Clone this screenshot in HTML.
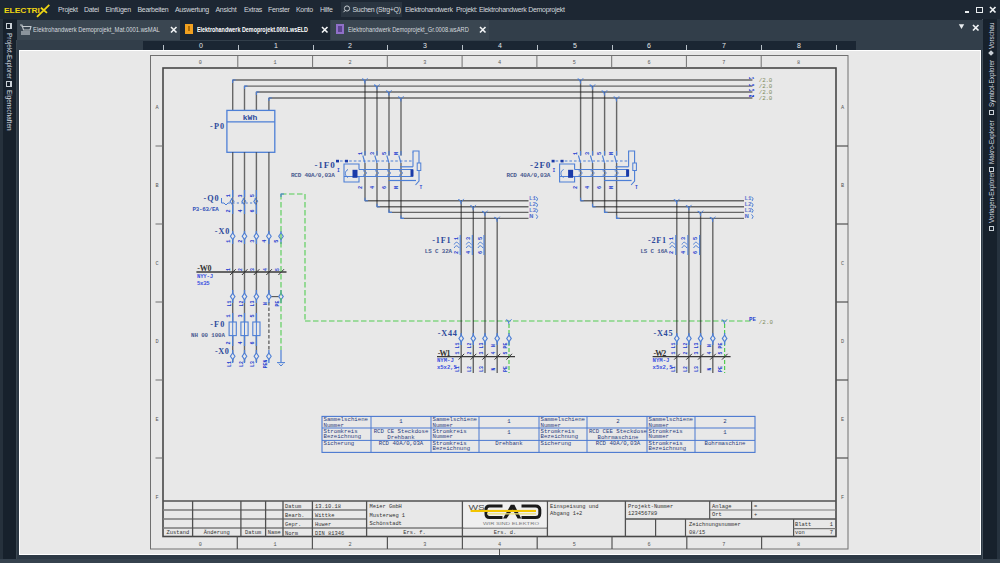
<!DOCTYPE html>
<html><head><meta charset="utf-8">
<style>
*{margin:0;padding:0;box-sizing:border-box}
html,body{width:1000px;height:563px;overflow:hidden;background:#2d3945;font-family:"Liberation Sans",sans-serif}
.a{position:absolute}
#title{left:0;top:0;width:1000px;height:20px;background:#1d2733}
.menu{top:5.8px;font-size:7px;line-height:8px;color:#d3d8dd;white-space:nowrap;letter-spacing:-0.3px}
#tabs{left:17px;top:20px;width:966px;height:30px;background:#323e4a}
.tab{top:20px;height:20px;background:#3a4651}
.tt{top:25.6px;font-size:6.5px;line-height:8px;color:#d5dadf;white-space:nowrap;letter-spacing:-0.2px}
.x{font-size:10px;line-height:10px;color:#fff;font-weight:bold}
#lside{left:0;top:19px;width:17px;height:544px;background:#17212c}
#rside{left:983px;top:19px;width:17px;height:544px;background:#17212c}
#ruler{left:143px;top:40.5px;width:713px;height:9.5px;background:#1b2633}
#canvas{left:19px;top:50px;width:961.5px;height:505px;background:#e8e8e8;border:1px solid #fff}
#status{left:0;top:559px;width:1000px;height:4px;background:#36424e}
.vt{font-size:6.4px;line-height:7px;color:#d5dbe0;white-space:nowrap;transform-origin:0 0}
.rl{top:41.5px;font-size:7px;line-height:7px;color:#e2e6ea}
.rk{top:45px;width:1px;height:4.5px;background:#b8c0c8}
svg{position:absolute;left:0;top:0}
svg text{font-family:"Liberation Mono",monospace}
</style></head><body>
<div id="title" class="a"></div>
<div id="lside" class="a"></div>
<div class="a" style="left:0;top:19px;width:3px;height:544px;background:#26313c"></div>
<div id="rside" class="a"></div>
<div class="a" style="left:982px;top:19px;width:1.3px;height:544px;background:#46525d"></div>
<div class="a" style="left:997px;top:19px;width:3px;height:544px;background:#26323e"></div>
<div class="a" style="left:16px;top:40px;width:1.3px;height:523px;background:#3a4650"></div>
<div id="tabs" class="a"></div>
<div id="status" class="a"></div>
<div id="ruler" class="a"></div>
<div id="canvas" class="a"></div>

<!-- logo -->
<div class="a" style="left:4px;top:6.5px;font-size:7px;line-height:7px;font-weight:bold;color:#eed514;transform:scaleX(1.2);transform-origin:0 0;letter-spacing:0">ELECTRI</div>
<svg width="60" height="20" style="left:0;top:0"><path d="M49.3 4.8 L37 16.8 M40.9 7.8 L47 12.9" stroke="#eed514" stroke-width="1.8" fill="none"/></svg>

<!-- menu -->
<div class="a menu" style="left:58px">Projekt</div>
<div class="a menu" style="left:84px">Datei</div>
<div class="a menu" style="left:105.5px">Einfügen</div>
<div class="a menu" style="left:137.5px">Bearbeiten</div>
<div class="a menu" style="left:175px">Auswertung</div>
<div class="a menu" style="left:215.5px">Ansicht</div>
<div class="a menu" style="left:244px">Extras</div>
<div class="a menu" style="left:268px">Fenster</div>
<div class="a menu" style="left:296px">Konto</div>
<div class="a menu" style="left:320px">Hilfe</div>
<div class="a" style="left:341px;top:2px;width:61px;height:15px;background:#2a3541"></div>
<svg width="12" height="12" style="left:342px;top:3px"><circle cx="5" cy="5.5" r="2.6" stroke="#d3d8dd" stroke-width="0.9" fill="none"/><path d="M3.2 7.4 L1.5 9.2" stroke="#d3d8dd" stroke-width="1"/></svg>
<div class="a menu" style="left:352.5px">Suchen (Strg+Q)</div>
<div class="a menu" style="left:405px">Elektrohandwerk&nbsp; Projekt: Elektrohandwerk Demoprojekt</div>
<!-- window controls -->
<div class="a" style="left:964.5px;top:11px;width:4.5px;height:1.6px;background:#e8ecef"></div>
<div class="a" style="left:976px;top:6.5px;width:6.5px;height:6px;border:1.4px solid #e8ecef"></div>
<svg width="8" height="8" style="left:989px;top:6px"><path d="M1 1 L6.5 6.5 M6.5 1 L1 6.5" stroke="#eef1f4" stroke-width="1.7"/></svg>
<!-- tabs -->
<div class="a tab" style="left:17px;width:163px"></div>
<div class="a tab" style="left:180px;width:150px;background:#1c2632"></div>
<div class="a tab" style="left:331px;width:158px"></div>
<svg width="16" height="16" style="left:19px;top:22px"><path d="M1 3 L3 3 L4.5 8 L11 8 L12 4.5 M2.5 4.5 L12.5 4.5" stroke="#c4c9ce" stroke-width="1.1" fill="none"/><rect x="2" y="9" width="9" height="4" fill="#8b949c"/></svg>
<div class="a tt" style="left:33.4px;transform:scaleX(0.9);transform-origin:0 0;letter-spacing:0">Elektrohandwerk Demoprojekt_Mat.0001.wsMAL</div>
<svg width="9" height="9" style="left:170px;top:25.5px"><path d="M1 1 L6.5 6.5 M6.5 1 L1 6.5" stroke="#f2f4f6" stroke-width="1.6"/></svg>
<div class="a" style="left:185px;top:24px;width:8px;height:10px;background:#f0a020"></div>
<div class="a" style="left:188px;top:26px;width:2px;height:5px;background:#b06a00"></div>
<div class="a tt" style="left:197px;color:#fff;font-weight:bold;letter-spacing:0;transform:scaleX(0.83);transform-origin:0 0">Elektrohandwerk Demoprojekt.0001.wsELD</div>
<svg width="9" height="9" style="left:321px;top:25.5px"><path d="M1 1 L6.5 6.5 M6.5 1 L1 6.5" stroke="#f2f4f6" stroke-width="1.6"/></svg>
<div class="a" style="left:336px;top:24px;width:8px;height:10px;background:#9070c8"></div>
<div class="a" style="left:338px;top:26px;width:4px;height:6px;background:#5c4490"></div>
<div class="a tt" style="left:348px;transform:scaleX(0.88);transform-origin:0 0;letter-spacing:0">Elektrohandwerk Demoprojekt_Gr.0008.wsARD</div>
<svg width="9" height="9" style="left:479px;top:25.5px"><path d="M1 1 L6.5 6.5 M6.5 1 L1 6.5" stroke="#f2f4f6" stroke-width="1.6"/></svg>
<!-- doc controls -->
<svg width="10" height="10" style="left:958px;top:23px"><path d="M0.8 1.2 L6.2 1.2 L3.5 6 Z" fill="#e8ecef"/></svg>
<svg width="9" height="9" style="left:972px;top:23.5px"><path d="M1 1 L6.5 6.5 M6.5 1 L1 6.5" stroke="#f2f4f6" stroke-width="1.7"/></svg>

<!-- sidebars -->
<div class="a" style="left:6px;top:23px;width:6px;height:6px;border:1px solid #c9d0d7;border-right-width:2px"></div>
<div class="a vt" style="left:12.5px;top:33px;transform:rotate(90deg)">Projekt-Explorer</div>
<div class="a" style="left:6px;top:81px;width:6px;height:6px;border:1px solid #c9d0d7;border-right-width:2px"></div>
<div class="a vt" style="left:12.5px;top:90px;transform:rotate(90deg)">Eigenschaften</div>

<div class="a vt" style="left:988px;top:49px;transform:rotate(-90deg)">Vorschau</div>
<div class="a" style="left:989px;top:51px;width:4px;height:4px;background:#c9d0d7;transform:rotate(45deg)"></div>
<div class="a vt" style="left:988px;top:107px;transform:rotate(-90deg)">Symbol-Explorer</div>
<div class="a" style="left:988.5px;top:110px;width:5px;height:5px;border:1px solid #c9d0d7"></div>
<div class="a vt" style="left:988px;top:164px;transform:rotate(-90deg)">Makro-Explorer</div>
<div class="a" style="left:988.5px;top:167px;width:5px;height:5px;border:1px solid #c9d0d7"></div>
<div class="a vt" style="left:988px;top:223px;transform:rotate(-90deg)">Vorlagen-Explorer</div>
<div class="a" style="left:988.5px;top:226px;width:5px;height:5px;border:1px solid #c9d0d7"></div>

<!-- ruler -->
<div class="a rk" style="left:163px"></div>
<div class="a rk" style="left:238px"></div>
<div class="a rk" style="left:313px"></div>
<div class="a rk" style="left:387px"></div>
<div class="a rk" style="left:462px"></div>
<div class="a rk" style="left:537px"></div>
<div class="a rk" style="left:612px"></div>
<div class="a rk" style="left:686px"></div>
<div class="a rk" style="left:761px"></div>
<div class="a rk" style="left:836px"></div>
<div class="a rl" style="left:199px">0</div>
<div class="a rl" style="left:274px">1</div>
<div class="a rl" style="left:348px">2</div>
<div class="a rl" style="left:423px">3</div>
<div class="a rl" style="left:498px">4</div>
<div class="a rl" style="left:573px">5</div>
<div class="a rl" style="left:647px">6</div>
<div class="a rl" style="left:722px">7</div>
<div class="a rl" style="left:797px">8</div>

<!--DRAWING--><svg width="1000" height="563" style="left:0;top:0">
<rect x="150.5" y="55.5" width="697.5" height="493.5" stroke="#707070" stroke-width="1.0" fill="none" />
<rect x="163" y="68" width="673" height="468.5" stroke="#474747" stroke-width="1.6" fill="none" />
<line x1="237.8" y1="55.5" x2="237.8" y2="68" stroke="#707070" stroke-width="1.0" />
<line x1="312.6" y1="55.5" x2="312.6" y2="68" stroke="#707070" stroke-width="1.0" />
<line x1="387.3" y1="55.5" x2="387.3" y2="68" stroke="#707070" stroke-width="1.0" />
<line x1="462.1" y1="55.5" x2="462.1" y2="68" stroke="#707070" stroke-width="1.0" />
<line x1="536.9" y1="55.5" x2="536.9" y2="68" stroke="#707070" stroke-width="1.0" />
<line x1="611.7" y1="55.5" x2="611.7" y2="68" stroke="#707070" stroke-width="1.0" />
<line x1="686.4" y1="55.5" x2="686.4" y2="68" stroke="#707070" stroke-width="1.0" />
<line x1="761.2" y1="55.5" x2="761.2" y2="68" stroke="#707070" stroke-width="1.0" />
<text x="200.38888888888889" y="64" font-size="5.2" fill="#555" text-anchor="middle" >0</text>
<text x="275.16666666666663" y="64" font-size="5.2" fill="#555" text-anchor="middle" >1</text>
<text x="349.94444444444446" y="64" font-size="5.2" fill="#555" text-anchor="middle" >2</text>
<text x="424.7222222222222" y="64" font-size="5.2" fill="#555" text-anchor="middle" >3</text>
<text x="499.5" y="64" font-size="5.2" fill="#555" text-anchor="middle" >4</text>
<text x="574.2777777777778" y="64" font-size="5.2" fill="#555" text-anchor="middle" >5</text>
<text x="649.0555555555555" y="64" font-size="5.2" fill="#555" text-anchor="middle" >6</text>
<text x="723.8333333333333" y="64" font-size="5.2" fill="#555" text-anchor="middle" >7</text>
<text x="798.6111111111111" y="64" font-size="5.2" fill="#555" text-anchor="middle" >8</text>
<line x1="237.3" y1="536.5" x2="237.3" y2="549" stroke="#555" stroke-width="1.2" />
<line x1="312.4" y1="536.5" x2="312.4" y2="549" stroke="#555" stroke-width="1.2" />
<line x1="387.4" y1="536.5" x2="387.4" y2="549" stroke="#555" stroke-width="1.2" />
<line x1="462.4" y1="536.5" x2="462.4" y2="549" stroke="#555" stroke-width="1.2" />
<line x1="537.2" y1="536.5" x2="537.2" y2="549" stroke="#555" stroke-width="1.2" />
<line x1="612" y1="536.5" x2="612" y2="549" stroke="#555" stroke-width="1.2" />
<line x1="686.8" y1="536.5" x2="686.8" y2="549" stroke="#555" stroke-width="1.2" />
<line x1="761.6" y1="536.5" x2="761.6" y2="549" stroke="#555" stroke-width="1.2" />
<text x="200.38888888888889" y="545.5" font-size="5.2" fill="#555" text-anchor="middle" >0</text>
<text x="275.16666666666663" y="545.5" font-size="5.2" fill="#555" text-anchor="middle" >1</text>
<text x="349.94444444444446" y="545.5" font-size="5.2" fill="#555" text-anchor="middle" >2</text>
<text x="424.7222222222222" y="545.5" font-size="5.2" fill="#555" text-anchor="middle" >3</text>
<text x="499.5" y="545.5" font-size="5.2" fill="#555" text-anchor="middle" >4</text>
<text x="574.2777777777778" y="545.5" font-size="5.2" fill="#555" text-anchor="middle" >5</text>
<text x="649.0555555555555" y="545.5" font-size="5.2" fill="#555" text-anchor="middle" >6</text>
<text x="723.8333333333333" y="545.5" font-size="5.2" fill="#555" text-anchor="middle" >7</text>
<text x="798.6111111111111" y="545.5" font-size="5.2" fill="#555" text-anchor="middle" >8</text>
<text x="157" y="109" font-size="5.2" fill="#555" text-anchor="middle" >A</text>
<text x="842.5" y="109" font-size="5.2" fill="#555" text-anchor="middle" >A</text>
<text x="157" y="187" font-size="5.2" fill="#555" text-anchor="middle" >B</text>
<text x="842.5" y="187" font-size="5.2" fill="#555" text-anchor="middle" >B</text>
<line x1="155.5" y1="146" x2="163" y2="146" stroke="#707070" stroke-width="1.0" />
<line x1="836" y1="146" x2="848" y2="146" stroke="#505050" stroke-width="1.2" />
<text x="157" y="265" font-size="5.2" fill="#555" text-anchor="middle" >C</text>
<text x="842.5" y="265" font-size="5.2" fill="#555" text-anchor="middle" >C</text>
<line x1="155.5" y1="224" x2="163" y2="224" stroke="#707070" stroke-width="1.0" />
<line x1="836" y1="224" x2="848" y2="224" stroke="#505050" stroke-width="1.2" />
<text x="157" y="343" font-size="5.2" fill="#555" text-anchor="middle" >D</text>
<text x="842.5" y="343" font-size="5.2" fill="#555" text-anchor="middle" >D</text>
<line x1="155.5" y1="302" x2="163" y2="302" stroke="#707070" stroke-width="1.0" />
<line x1="836" y1="302" x2="848" y2="302" stroke="#505050" stroke-width="1.2" />
<text x="157" y="421" font-size="5.2" fill="#555" text-anchor="middle" >E</text>
<text x="842.5" y="421" font-size="5.2" fill="#555" text-anchor="middle" >E</text>
<line x1="155.5" y1="380" x2="163" y2="380" stroke="#707070" stroke-width="1.0" />
<line x1="836" y1="380" x2="848" y2="380" stroke="#505050" stroke-width="1.2" />
<text x="157" y="499" font-size="5.2" fill="#555" text-anchor="middle" >F</text>
<text x="842.5" y="499" font-size="5.2" fill="#555" text-anchor="middle" >F</text>
<line x1="155.5" y1="458" x2="163" y2="458" stroke="#707070" stroke-width="1.0" />
<line x1="836" y1="458" x2="848" y2="458" stroke="#505050" stroke-width="1.2" />
<line x1="163" y1="501" x2="836" y2="501" stroke="#505050" stroke-width="1.6" />
<line x1="163" y1="510" x2="283" y2="510" stroke="#7a7a7a" stroke-width="1.3" />
<line x1="283" y1="510" x2="366.6" y2="510" stroke="#7a7a7a" stroke-width="1.3" />
<line x1="163" y1="519" x2="283" y2="519" stroke="#7a7a7a" stroke-width="1.3" />
<line x1="283" y1="519" x2="366.6" y2="519" stroke="#7a7a7a" stroke-width="1.3" />
<line x1="163" y1="528" x2="283" y2="528" stroke="#7a7a7a" stroke-width="1.3" />
<line x1="283" y1="528" x2="366.6" y2="528" stroke="#7a7a7a" stroke-width="1.3" />
<line x1="366.6" y1="528" x2="547.4" y2="528" stroke="#7a7a7a" stroke-width="1.3" />
<line x1="192.6" y1="501" x2="192.6" y2="536.5" stroke="#505050" stroke-width="1.3" />
<line x1="240.9" y1="501" x2="240.9" y2="536.5" stroke="#505050" stroke-width="1.3" />
<line x1="265.6" y1="501" x2="265.6" y2="536.5" stroke="#505050" stroke-width="1.3" />
<line x1="283" y1="501" x2="283" y2="536.5" stroke="#505050" stroke-width="1.3" />
<line x1="312.4" y1="501" x2="312.4" y2="536.5" stroke="#505050" stroke-width="1.3" />
<line x1="366.6" y1="501" x2="366.6" y2="536.5" stroke="#505050" stroke-width="1.3" />
<line x1="462.4" y1="501" x2="462.4" y2="536.5" stroke="#505050" stroke-width="1.3" />
<line x1="547.4" y1="501" x2="547.4" y2="536.5" stroke="#505050" stroke-width="1.3" />
<line x1="625.4" y1="501" x2="625.4" y2="536.5" stroke="#505050" stroke-width="1.3" />
<text x="177.8" y="533.8" font-size="5.4" fill="#333" text-anchor="middle" >Zustand</text>
<text x="216.7" y="533.8" font-size="5.4" fill="#333" text-anchor="middle" >Änderung</text>
<text x="253.2" y="533.8" font-size="5.4" fill="#333" text-anchor="middle" >Datum</text>
<text x="274.3" y="533.8" font-size="5.4" fill="#333" text-anchor="middle" >Name</text>
<text x="285" y="507.6" font-size="5.4" fill="#333" text-anchor="start" >Datum</text>
<text x="315" y="507.6" font-size="5.4" fill="#333" text-anchor="start" >13.10.18</text>
<text x="285" y="516.6" font-size="5.4" fill="#333" text-anchor="start" >Bearb.</text>
<text x="315" y="516.6" font-size="5.4" fill="#333" text-anchor="start" >Wittke</text>
<text x="285" y="525.6" font-size="5.4" fill="#333" text-anchor="start" >Gepr.</text>
<text x="315" y="525.6" font-size="5.4" fill="#333" text-anchor="start" >Huwer</text>
<text x="285" y="534.6" font-size="5.4" fill="#333" text-anchor="start" >Norm</text>
<text x="315" y="534.6" font-size="5.4" fill="#333" text-anchor="start" >DIN 81346</text>
<text x="369.5" y="507.6" font-size="5.4" fill="#333" text-anchor="start" >Meier GmbH</text>
<text x="369.5" y="516.6" font-size="5.4" fill="#333" text-anchor="start" >Musterweg 1</text>
<text x="369.5" y="525.4" font-size="5.4" fill="#333" text-anchor="start" >Schönstadt</text>
<text x="414.5" y="534" font-size="5.4" fill="#333" text-anchor="middle" >Ers. f.</text>
<text x="505" y="534" font-size="5.4" fill="#333" text-anchor="middle" >Ers. d.</text>
<text x="550" y="508" font-size="5.4" fill="#333" text-anchor="start" >Einspeisung und</text>
<text x="550" y="514.5" font-size="5.4" fill="#333" text-anchor="start" >Abgang 1+2</text>
<line x1="625.4" y1="519" x2="836" y2="519" stroke="#505050" stroke-width="1.3" />
<line x1="709.7" y1="510" x2="836" y2="510" stroke="#7a7a7a" stroke-width="1.2" />
<line x1="709.7" y1="501" x2="709.7" y2="519" stroke="#505050" stroke-width="1.2" />
<line x1="751.6" y1="501" x2="751.6" y2="519" stroke="#505050" stroke-width="1.2" />
<line x1="655.6" y1="519" x2="655.6" y2="536.5" stroke="#505050" stroke-width="1.2" />
<line x1="685.5" y1="519" x2="685.5" y2="536.5" stroke="#505050" stroke-width="1.2" />
<line x1="793.6" y1="519" x2="793.6" y2="536.5" stroke="#505050" stroke-width="1.2" />
<line x1="793.6" y1="528.6" x2="836" y2="528.6" stroke="#7a7a7a" stroke-width="1.2" />
<text x="628" y="508" font-size="5.4" fill="#333" text-anchor="start" >Projekt-Nummer</text>
<text x="628" y="515" font-size="5.4" fill="#333" text-anchor="start" >123456789</text>
<text x="712" y="507.6" font-size="5.4" fill="#333" text-anchor="start" >Anlage</text>
<text x="754" y="507.6" font-size="5.4" fill="#333" text-anchor="start" >=</text>
<text x="712" y="516.4" font-size="5.4" fill="#333" text-anchor="start" >Ort</text>
<text x="754" y="516.4" font-size="5.4" fill="#333" text-anchor="start" >+</text>
<text x="689" y="525.5" font-size="5.4" fill="#333" text-anchor="start" >Zeichnungsnummer</text>
<text x="689" y="533.5" font-size="5.4" fill="#333" text-anchor="start" >08/15</text>
<text x="795" y="525.6" font-size="5.4" fill="#333" text-anchor="start" >Blatt</text>
<text x="833" y="525.6" font-size="5.4" fill="#333" text-anchor="end" >1</text>
<text x="795" y="534" font-size="5.4" fill="#333" text-anchor="start" >von</text>
<text x="833" y="534" font-size="5.4" fill="#333" text-anchor="end" >7</text>
<g>
<rect x="463.5" y="502.5" width="83" height="25" stroke="none" stroke-width="0" fill="#efefef" />
<text x="468.4" y="509.6" font-size="6.6" fill="#4a4a4a" text-anchor="start" style="font-family:&quot;Liberation Sans&quot;" textLength="16.4" lengthAdjust="spacingAndGlyphs" >WS</text>
<path d="M502.5 506 L489.5 506 Q486 506 486 509.5 L486 514 Q486 517.5 489.5 517.5 L502.5 517.5" stroke="#1a1a1a" stroke-width="3.0" fill="none" />
<path d="M503 518.6 L510.8 504.8 L514.4 504.8 L521.2 518.6 L517.6 518.6 L512.6 509.5 L506.6 518.6 Z" stroke="#1a1a1a" stroke-width="0" fill="#1a1a1a" />
<path d="M521.5 506 L535.5 506 Q539.8 506 539.8 510 L539.8 513.5 Q539.8 517.5 535.5 517.5 L521.5 517.5" stroke="#1a1a1a" stroke-width="3.0" fill="none" />
<rect x="470.6" y="509.9" width="65.4" height="2.1" stroke="none" stroke-width="0" fill="#f2c400" />
<rect x="487" y="513.2" width="49" height="1.3" stroke="none" stroke-width="0" fill="#ece07a" />
<text x="511" y="524.6" font-size="2.8" fill="#777" text-anchor="middle" style="font-family:&quot;Liberation Sans&quot;" textLength="56" lengthAdjust="spacingAndGlyphs" >WIR SIND ELEKTRO</text>
</g>
<rect x="322" y="416.4" width="433" height="36" stroke="#4a78d0" stroke-width="1.1" fill="none" />
<line x1="322" y1="428" x2="755" y2="428" stroke="#4a78d0" stroke-width="1.0" />
<line x1="322" y1="440.4" x2="755" y2="440.4" stroke="#4a78d0" stroke-width="1.0" />
<line x1="371" y1="416.4" x2="371" y2="452.4" stroke="#4a78d0" stroke-width="1.0" />
<line x1="431" y1="416.4" x2="431" y2="452.4" stroke="#4a78d0" stroke-width="1.0" />
<line x1="479" y1="416.4" x2="479" y2="452.4" stroke="#4a78d0" stroke-width="1.0" />
<line x1="539" y1="416.4" x2="539" y2="452.4" stroke="#4a78d0" stroke-width="1.0" />
<line x1="587" y1="416.4" x2="587" y2="452.4" stroke="#4a78d0" stroke-width="1.0" />
<line x1="647" y1="416.4" x2="647" y2="452.4" stroke="#4a78d0" stroke-width="1.0" />
<line x1="695" y1="416.4" x2="695" y2="452.4" stroke="#4a78d0" stroke-width="1.0" />
<line x1="499.5" y1="549" x2="499.5" y2="555" stroke="#555" stroke-width="1.0" />
<text x="323.5" y="421.0" font-size="5.6" fill="#2a3c7c" text-anchor="start" textLength="44.5" lengthAdjust="spacingAndGlyphs" >Sammelschiene</text>
<text x="323.5" y="426.5" font-size="5.6" fill="#2a3c7c" text-anchor="start" textLength="20.5" lengthAdjust="spacingAndGlyphs" >Nummer</text>
<text x="323.5" y="432.5" font-size="5.6" fill="#2a3c7c" text-anchor="start" textLength="34.2" lengthAdjust="spacingAndGlyphs" >Stromkreis</text>
<text x="323.5" y="438.0" font-size="5.6" fill="#2a3c7c" text-anchor="start" textLength="37.6" lengthAdjust="spacingAndGlyphs" >Bezeichnung</text>
<text x="323.5" y="444.8" font-size="5.6" fill="#2a3c7c" text-anchor="start" textLength="30.8" lengthAdjust="spacingAndGlyphs" >Sicherung</text>
<text x="401" y="422.5" font-size="5.6" fill="#2a3c7c" text-anchor="middle" textLength="3.4" lengthAdjust="spacingAndGlyphs" >1</text>
<text x="401" y="433.2" font-size="5.6" fill="#2a3c7c" text-anchor="middle" textLength="54.7" lengthAdjust="spacingAndGlyphs" >RCD CE Steckdose</text>
<text x="401" y="438.7" font-size="5.6" fill="#2a3c7c" text-anchor="middle" textLength="27.4" lengthAdjust="spacingAndGlyphs" >Drehbank</text>
<text x="401" y="445.4" font-size="5.6" fill="#2a3c7c" text-anchor="middle" textLength="44.5" lengthAdjust="spacingAndGlyphs" >RCD 40A/0,03A</text>
<text x="540.5" y="421.0" font-size="5.6" fill="#2a3c7c" text-anchor="start" textLength="44.5" lengthAdjust="spacingAndGlyphs" >Sammelschiene</text>
<text x="540.5" y="426.5" font-size="5.6" fill="#2a3c7c" text-anchor="start" textLength="20.5" lengthAdjust="spacingAndGlyphs" >Nummer</text>
<text x="540.5" y="432.5" font-size="5.6" fill="#2a3c7c" text-anchor="start" textLength="34.2" lengthAdjust="spacingAndGlyphs" >Stromkreis</text>
<text x="540.5" y="438.0" font-size="5.6" fill="#2a3c7c" text-anchor="start" textLength="37.6" lengthAdjust="spacingAndGlyphs" >Bezeichnung</text>
<text x="540.5" y="444.8" font-size="5.6" fill="#2a3c7c" text-anchor="start" textLength="30.8" lengthAdjust="spacingAndGlyphs" >Sicherung</text>
<text x="618" y="422.5" font-size="5.6" fill="#2a3c7c" text-anchor="middle" textLength="3.4" lengthAdjust="spacingAndGlyphs" >2</text>
<text x="618" y="433.2" font-size="5.6" fill="#2a3c7c" text-anchor="middle" textLength="58.1" lengthAdjust="spacingAndGlyphs" >RCD CEE Steckdose</text>
<text x="618" y="438.7" font-size="5.6" fill="#2a3c7c" text-anchor="middle" textLength="41.0" lengthAdjust="spacingAndGlyphs" >Bohrmaschine</text>
<text x="618" y="445.4" font-size="5.6" fill="#2a3c7c" text-anchor="middle" textLength="44.5" lengthAdjust="spacingAndGlyphs" >RCD 40A/0,03A</text>
<text x="432.5" y="421.0" font-size="5.6" fill="#2a3c7c" text-anchor="start" textLength="44.5" lengthAdjust="spacingAndGlyphs" >Sammelschiene</text>
<text x="432.5" y="426.5" font-size="5.6" fill="#2a3c7c" text-anchor="start" textLength="20.5" lengthAdjust="spacingAndGlyphs" >Nummer</text>
<text x="432.5" y="432.5" font-size="5.6" fill="#2a3c7c" text-anchor="start" textLength="34.2" lengthAdjust="spacingAndGlyphs" >Stromkreis</text>
<text x="432.5" y="438.0" font-size="5.6" fill="#2a3c7c" text-anchor="start" textLength="20.5" lengthAdjust="spacingAndGlyphs" >Nummer</text>
<text x="432.5" y="444.8" font-size="5.6" fill="#2a3c7c" text-anchor="start" textLength="34.2" lengthAdjust="spacingAndGlyphs" >Stromkreis</text>
<text x="432.5" y="450.3" font-size="5.6" fill="#2a3c7c" text-anchor="start" textLength="37.6" lengthAdjust="spacingAndGlyphs" >Bezeichnung</text>
<text x="509" y="422.5" font-size="5.6" fill="#2a3c7c" text-anchor="middle" textLength="3.4" lengthAdjust="spacingAndGlyphs" >1</text>
<text x="509" y="433.5" font-size="5.6" fill="#2a3c7c" text-anchor="middle" textLength="3.4" lengthAdjust="spacingAndGlyphs" >1</text>
<text x="509" y="445.4" font-size="5.6" fill="#2a3c7c" text-anchor="middle" textLength="27.4" lengthAdjust="spacingAndGlyphs" >Drehbank</text>
<text x="648.5" y="421.0" font-size="5.6" fill="#2a3c7c" text-anchor="start" textLength="44.5" lengthAdjust="spacingAndGlyphs" >Sammelschiene</text>
<text x="648.5" y="426.5" font-size="5.6" fill="#2a3c7c" text-anchor="start" textLength="20.5" lengthAdjust="spacingAndGlyphs" >Nummer</text>
<text x="648.5" y="432.5" font-size="5.6" fill="#2a3c7c" text-anchor="start" textLength="34.2" lengthAdjust="spacingAndGlyphs" >Stromkreis</text>
<text x="648.5" y="438.0" font-size="5.6" fill="#2a3c7c" text-anchor="start" textLength="20.5" lengthAdjust="spacingAndGlyphs" >Nummer</text>
<text x="648.5" y="444.8" font-size="5.6" fill="#2a3c7c" text-anchor="start" textLength="34.2" lengthAdjust="spacingAndGlyphs" >Stromkreis</text>
<text x="648.5" y="450.3" font-size="5.6" fill="#2a3c7c" text-anchor="start" textLength="37.6" lengthAdjust="spacingAndGlyphs" >Bezeichnung</text>
<text x="725" y="422.5" font-size="5.6" fill="#2a3c7c" text-anchor="middle" textLength="3.4" lengthAdjust="spacingAndGlyphs" >2</text>
<text x="725" y="433.5" font-size="5.6" fill="#2a3c7c" text-anchor="middle" textLength="3.4" lengthAdjust="spacingAndGlyphs" >1</text>
<text x="725" y="445.4" font-size="5.6" fill="#2a3c7c" text-anchor="middle" textLength="41.0" lengthAdjust="spacingAndGlyphs" >Bohrmaschine</text>
<line x1="232.7" y1="80" x2="752.4" y2="80" stroke="#1e1e1e" stroke-width="1.4"  stroke-opacity="0.64"/>
<line x1="232.7" y1="80" x2="232.7" y2="110" stroke="#1e1e1e" stroke-width="1.4"  stroke-opacity="0.64"/>
<path d="M232.7 83 L232.7 80 L235.7 80" stroke="#4d7fd6" stroke-width="1.1" fill="none" />
<line x1="244.5" y1="86.1" x2="752.4" y2="86.1" stroke="#1e1e1e" stroke-width="1.4"  stroke-opacity="0.64"/>
<line x1="244.5" y1="86.1" x2="244.5" y2="110" stroke="#1e1e1e" stroke-width="1.4"  stroke-opacity="0.64"/>
<path d="M244.5 89.1 L244.5 86.1 L247.5 86.1" stroke="#4d7fd6" stroke-width="1.1" fill="none" />
<line x1="256.4" y1="92" x2="752.4" y2="92" stroke="#1e1e1e" stroke-width="1.4"  stroke-opacity="0.64"/>
<line x1="256.4" y1="92" x2="256.4" y2="110" stroke="#1e1e1e" stroke-width="1.4"  stroke-opacity="0.64"/>
<path d="M256.4 95 L256.4 92 L259.4 92" stroke="#4d7fd6" stroke-width="1.1" fill="none" />
<line x1="268.9" y1="98" x2="752.4" y2="98" stroke="#1e1e1e" stroke-width="1.4"  stroke-opacity="0.64"/>
<line x1="268.9" y1="98" x2="268.9" y2="110" stroke="#1e1e1e" stroke-width="1.4"  stroke-opacity="0.64"/>
<path d="M268.9 101 L268.9 98 L271.9 98" stroke="#4d7fd6" stroke-width="1.1" fill="none" />
<text x="748.5" y="79.4" font-size="4.2" fill="#2440d0" text-anchor="start" font-weight="bold" textLength="6" lengthAdjust="spacingAndGlyphs" >L1</text>
<text x="758.8" y="82" font-size="5.8" fill="#7d8a5c" text-anchor="start" font-weight="normal" textLength="13.5" lengthAdjust="spacing" >/2.0</text>
<text x="748.5" y="85.5" font-size="4.2" fill="#2440d0" text-anchor="start" font-weight="bold" textLength="6" lengthAdjust="spacingAndGlyphs" >L2</text>
<text x="758.8" y="88.1" font-size="5.8" fill="#7d8a5c" text-anchor="start" font-weight="normal" textLength="13.5" lengthAdjust="spacing" >/2.0</text>
<text x="748.5" y="91.4" font-size="4.2" fill="#2440d0" text-anchor="start" font-weight="bold" textLength="6" lengthAdjust="spacingAndGlyphs" >L3</text>
<text x="758.8" y="94" font-size="5.8" fill="#7d8a5c" text-anchor="start" font-weight="normal" textLength="13.5" lengthAdjust="spacing" >/2.0</text>
<text x="748.5" y="97.4" font-size="4.2" fill="#2440d0" text-anchor="start" font-weight="bold" textLength="6" lengthAdjust="spacingAndGlyphs" >N</text>
<text x="758.8" y="100" font-size="5.8" fill="#7d8a5c" text-anchor="start" font-weight="normal" textLength="13.5" lengthAdjust="spacing" >/2.0</text>
<rect x="226.9" y="110.4" width="47.9" height="41.9" stroke="#4d7fd6" stroke-width="1.3" fill="none" />
<line x1="226.9" y1="121.9" x2="274.8" y2="121.9" stroke="#4d7fd6" stroke-width="1.3" />
<text x="242.8" y="120" font-size="8" fill="#2d4a9c" text-anchor="start" font-weight="bold" textLength="14.4" lengthAdjust="spacingAndGlyphs" >kWh</text>
<text x="210" y="129" font-size="8.208" fill="#2d4a9c" text-anchor="start" style="font-family:&quot;Liberation Serif&quot;" font-weight="bold" textLength="14.2" lengthAdjust="spacing" >-P0</text>
<line x1="232.7" y1="152.3" x2="232.7" y2="362" stroke="#1e1e1e" stroke-width="1.4"  stroke-opacity="0.64"/>
<line x1="244.5" y1="152.3" x2="244.5" y2="362" stroke="#1e1e1e" stroke-width="1.4"  stroke-opacity="0.64"/>
<line x1="256.4" y1="152.3" x2="256.4" y2="362" stroke="#1e1e1e" stroke-width="1.4"  stroke-opacity="0.64"/>
<line x1="268.9" y1="152.3" x2="268.9" y2="296.6" stroke="#1e1e1e" stroke-width="1.4"  stroke-opacity="0.64"/>
<line x1="268.9" y1="296.6" x2="268.9" y2="350" stroke="#1e1e1e" stroke-width="1.4" stroke-dasharray="3.5 2" stroke-opacity="0.64"/>
<line x1="232.7" y1="190" x2="232.7" y2="197" stroke="#4d7fd6" stroke-width="1.3" />
<line x1="232.7" y1="205" x2="232.7" y2="214" stroke="#4d7fd6" stroke-width="1.3" />
<path d="M232.7 197.5 L230.1 201.5 L232.7 205" stroke="#4d7fd6" stroke-width="1.1" fill="none" />
<path d="M230.89999999999998 198.5 L234.29999999999998 201 L232.7 203" stroke="#4d7fd6" stroke-width="0.9" fill="none" />
<text x="228.89999999999998" y="195.8" font-size="5.2" fill="#2440d0" font-weight="bold" text-anchor="middle" dominant-baseline="central" transform="rotate(-90 228.89999999999998 195.8)">1</text>
<text x="228.89999999999998" y="211" font-size="5.2" fill="#2440d0" font-weight="bold" text-anchor="middle" dominant-baseline="central" transform="rotate(-90 228.89999999999998 211)">2</text>
<line x1="244.5" y1="190" x2="244.5" y2="197" stroke="#4d7fd6" stroke-width="1.3" />
<line x1="244.5" y1="205" x2="244.5" y2="214" stroke="#4d7fd6" stroke-width="1.3" />
<path d="M244.5 197.5 L241.9 201.5 L244.5 205" stroke="#4d7fd6" stroke-width="1.1" fill="none" />
<path d="M242.7 198.5 L246.1 201 L244.5 203" stroke="#4d7fd6" stroke-width="0.9" fill="none" />
<text x="240.7" y="195.8" font-size="5.2" fill="#2440d0" font-weight="bold" text-anchor="middle" dominant-baseline="central" transform="rotate(-90 240.7 195.8)">3</text>
<text x="240.7" y="211" font-size="5.2" fill="#2440d0" font-weight="bold" text-anchor="middle" dominant-baseline="central" transform="rotate(-90 240.7 211)">4</text>
<line x1="256.4" y1="190" x2="256.4" y2="197" stroke="#4d7fd6" stroke-width="1.3" />
<line x1="256.4" y1="205" x2="256.4" y2="214" stroke="#4d7fd6" stroke-width="1.3" />
<path d="M256.4 197.5 L253.79999999999998 201.5 L256.4 205" stroke="#4d7fd6" stroke-width="1.1" fill="none" />
<path d="M254.59999999999997 198.5 L258.0 201 L256.4 203" stroke="#4d7fd6" stroke-width="0.9" fill="none" />
<text x="252.59999999999997" y="195.8" font-size="5.2" fill="#2440d0" font-weight="bold" text-anchor="middle" dominant-baseline="central" transform="rotate(-90 252.59999999999997 195.8)">5</text>
<text x="252.59999999999997" y="211" font-size="5.2" fill="#2440d0" font-weight="bold" text-anchor="middle" dominant-baseline="central" transform="rotate(-90 252.59999999999997 211)">6</text>
<path d="M221.5 198 L221.5 203 L224 203 L226 205 L228 203" stroke="#4d7fd6" stroke-width="1.0" fill="none" />
<line x1="228" y1="203" x2="256" y2="203" stroke="#4d7fd6" stroke-width="1.0" stroke-dasharray="2.2 2.2"/>
<text x="203.5" y="201.3" font-size="8.208" fill="#2d4a9c" text-anchor="start" style="font-family:&quot;Liberation Serif&quot;" font-weight="bold" textLength="15.0" lengthAdjust="spacing" >-Q0</text>
<text x="192.5" y="210.5" font-size="5.8" fill="#3050b8" text-anchor="start" font-weight="bold" textLength="26.3" lengthAdjust="spacing" >P3-63/EA</text>
<line x1="232.7" y1="231" x2="232.7" y2="244" stroke="#4d7fd6" stroke-width="1.3" />
<path d="M232.7 233.0 L235.0 236.3 L232.7 239.60000000000002 L230.39999999999998 236.3 Z" stroke="#4d7fd6" stroke-width="1.1" fill="#e8e8e8" />
<text x="229.2" y="241.2" font-size="5.2" fill="#2440d0" font-weight="bold" text-anchor="middle" dominant-baseline="central" transform="rotate(-90 229.2 241.2)">1</text>
<line x1="244.5" y1="231" x2="244.5" y2="244" stroke="#4d7fd6" stroke-width="1.3" />
<path d="M244.5 233.0 L246.8 236.3 L244.5 239.60000000000002 L242.2 236.3 Z" stroke="#4d7fd6" stroke-width="1.1" fill="#e8e8e8" />
<text x="241.0" y="241.2" font-size="5.2" fill="#2440d0" font-weight="bold" text-anchor="middle" dominant-baseline="central" transform="rotate(-90 241.0 241.2)">2</text>
<line x1="256.4" y1="231" x2="256.4" y2="244" stroke="#4d7fd6" stroke-width="1.3" />
<path d="M256.4 233.0 L258.7 236.3 L256.4 239.60000000000002 L254.09999999999997 236.3 Z" stroke="#4d7fd6" stroke-width="1.1" fill="#e8e8e8" />
<text x="252.89999999999998" y="241.2" font-size="5.2" fill="#2440d0" font-weight="bold" text-anchor="middle" dominant-baseline="central" transform="rotate(-90 252.89999999999998 241.2)">3</text>
<line x1="268.9" y1="231" x2="268.9" y2="244" stroke="#4d7fd6" stroke-width="1.3" />
<path d="M268.9 233.0 L271.2 236.3 L268.9 239.60000000000002 L266.59999999999997 236.3 Z" stroke="#4d7fd6" stroke-width="1.1" fill="#e8e8e8" />
<text x="265.4" y="241.2" font-size="5.2" fill="#2440d0" font-weight="bold" text-anchor="middle" dominant-baseline="central" transform="rotate(-90 265.4 241.2)">4</text>
<line x1="281" y1="231" x2="281" y2="244" stroke="#4d7fd6" stroke-width="1.3" />
<path d="M281 233.0 L283.3 236.3 L281 239.60000000000002 L278.7 236.3 Z" stroke="#4d7fd6" stroke-width="1.1" fill="#e8e8e8" />
<text x="277.5" y="241.2" font-size="5.2" fill="#2440d0" font-weight="bold" text-anchor="middle" dominant-baseline="central" transform="rotate(-90 277.5 241.2)">5</text>
<text x="214.8" y="234" font-size="8.208" fill="#2d4a9c" text-anchor="start" style="font-family:&quot;Liberation Serif&quot;" font-weight="bold" textLength="14.5" lengthAdjust="spacing" >-X0</text>
<line x1="196.4" y1="272" x2="286.5" y2="272" stroke="#3a3a3a" stroke-width="1.4" />
<line x1="230.1" y1="275" x2="235.7" y2="269.2" stroke="#333" stroke-width="1.0" />
<text x="228.89999999999998" y="269.5" font-size="4.8" fill="#2440d0" font-weight="bold" text-anchor="middle" dominant-baseline="central" transform="rotate(-90 228.89999999999998 269.5)">1</text>
<line x1="241.9" y1="275" x2="247.5" y2="269.2" stroke="#333" stroke-width="1.0" />
<text x="240.7" y="269.5" font-size="4.8" fill="#2440d0" font-weight="bold" text-anchor="middle" dominant-baseline="central" transform="rotate(-90 240.7 269.5)">2</text>
<line x1="253.79999999999998" y1="275" x2="259.4" y2="269.2" stroke="#333" stroke-width="1.0" />
<text x="252.59999999999997" y="269.5" font-size="4.8" fill="#2440d0" font-weight="bold" text-anchor="middle" dominant-baseline="central" transform="rotate(-90 252.59999999999997 269.5)">3</text>
<line x1="266.29999999999995" y1="275" x2="271.9" y2="269.2" stroke="#333" stroke-width="1.0" />
<text x="265.09999999999997" y="269.5" font-size="4.8" fill="#2440d0" font-weight="bold" text-anchor="middle" dominant-baseline="central" transform="rotate(-90 265.09999999999997 269.5)">4</text>
<line x1="278.4" y1="275" x2="284" y2="269.2" stroke="#333" stroke-width="1.0" />
<text x="277.2" y="269.5" font-size="4.8" fill="#2440d0" font-weight="bold" text-anchor="middle" dominant-baseline="central" transform="rotate(-90 277.2 269.5)">5</text>
<text x="197.2" y="271.4" font-size="7.992000000000001" fill="#333" text-anchor="start" style="font-family:&quot;Liberation Serif&quot;" font-weight="bold" textLength="14.2" lengthAdjust="spacing" >-W0</text>
<text x="197" y="278.3" font-size="5.6" fill="#3a50e0" text-anchor="start" font-weight="bold" textLength="16" lengthAdjust="spacing" >NYY-J</text>
<text x="197" y="284.5" font-size="5.6" fill="#3a50e0" text-anchor="start" font-weight="bold" textLength="12.6" lengthAdjust="spacing" >5x35</text>
<line x1="232.7" y1="290" x2="232.7" y2="303" stroke="#4d7fd6" stroke-width="1.3" />
<line x1="244.5" y1="290" x2="244.5" y2="303" stroke="#4d7fd6" stroke-width="1.3" />
<line x1="256.4" y1="290" x2="256.4" y2="303" stroke="#4d7fd6" stroke-width="1.3" />
<line x1="268.9" y1="290" x2="268.9" y2="303" stroke="#4d7fd6" stroke-width="1.3" />
<line x1="281" y1="290" x2="281" y2="303" stroke="#4d7fd6" stroke-width="1.3" />
<line x1="268.9" y1="296.6" x2="281" y2="296.6" stroke="#555" stroke-width="1.1" />
<path d="M232.7 293.3 L235.0 296.6 L232.7 299.90000000000003 L230.39999999999998 296.6 Z" stroke="#4d7fd6" stroke-width="1.1" fill="#e8e8e8" />
<path d="M244.5 293.3 L246.8 296.6 L244.5 299.90000000000003 L242.2 296.6 Z" stroke="#4d7fd6" stroke-width="1.1" fill="#e8e8e8" />
<path d="M256.4 293.3 L258.7 296.6 L256.4 299.90000000000003 L254.09999999999997 296.6 Z" stroke="#4d7fd6" stroke-width="1.1" fill="#e8e8e8" />
<path d="M268.9 293.3 L271.2 296.6 L268.9 299.90000000000003 L266.59999999999997 296.6 Z" stroke="#4d7fd6" stroke-width="1.1" fill="#e8e8e8" />
<path d="M281 293.3 L283.3 296.6 L281 299.90000000000003 L278.7 296.6 Z" stroke="#4d7fd6" stroke-width="1.1" fill="#e8e8e8" />
<text x="229.2" y="303.5" font-size="4.8" fill="#2440d0" font-weight="bold" text-anchor="middle" dominant-baseline="central" transform="rotate(-90 229.2 303.5)">L1</text>
<text x="241.0" y="303.5" font-size="4.8" fill="#2440d0" font-weight="bold" text-anchor="middle" dominant-baseline="central" transform="rotate(-90 241.0 303.5)">L2</text>
<text x="252.89999999999998" y="303.5" font-size="4.8" fill="#2440d0" font-weight="bold" text-anchor="middle" dominant-baseline="central" transform="rotate(-90 252.89999999999998 303.5)">L3</text>
<text x="265.4" y="303.5" font-size="4.8" fill="#2440d0" font-weight="bold" text-anchor="middle" dominant-baseline="central" transform="rotate(-90 265.4 303.5)">N</text>
<text x="277.5" y="303.5" font-size="4.8" fill="#2440d0" font-weight="bold" text-anchor="middle" dominant-baseline="central" transform="rotate(-90 277.5 303.5)">PE</text>
<line x1="232.7" y1="313" x2="232.7" y2="346" stroke="#4d7fd6" stroke-width="1.3" />
<rect x="229.1" y="322" width="7.2" height="13.6" stroke="#4d7fd6" stroke-width="1.1" fill="#e8e8e8" />
<line x1="232.7" y1="322" x2="232.7" y2="335.6" stroke="#4d7fd6" stroke-width="1.0" />
<text x="228.89999999999998" y="316" font-size="5.2" fill="#2440d0" font-weight="bold" text-anchor="middle" dominant-baseline="central" transform="rotate(-90 228.89999999999998 316)">1</text>
<text x="228.89999999999998" y="343" font-size="5.2" fill="#2440d0" font-weight="bold" text-anchor="middle" dominant-baseline="central" transform="rotate(-90 228.89999999999998 343)">2</text>
<line x1="244.5" y1="313" x2="244.5" y2="346" stroke="#4d7fd6" stroke-width="1.3" />
<rect x="240.9" y="322" width="7.2" height="13.6" stroke="#4d7fd6" stroke-width="1.1" fill="#e8e8e8" />
<line x1="244.5" y1="322" x2="244.5" y2="335.6" stroke="#4d7fd6" stroke-width="1.0" />
<text x="240.7" y="316" font-size="5.2" fill="#2440d0" font-weight="bold" text-anchor="middle" dominant-baseline="central" transform="rotate(-90 240.7 316)">3</text>
<text x="240.7" y="343" font-size="5.2" fill="#2440d0" font-weight="bold" text-anchor="middle" dominant-baseline="central" transform="rotate(-90 240.7 343)">4</text>
<line x1="256.4" y1="313" x2="256.4" y2="346" stroke="#4d7fd6" stroke-width="1.3" />
<rect x="252.79999999999998" y="322" width="7.2" height="13.6" stroke="#4d7fd6" stroke-width="1.1" fill="#e8e8e8" />
<line x1="256.4" y1="322" x2="256.4" y2="335.6" stroke="#4d7fd6" stroke-width="1.0" />
<text x="252.59999999999997" y="316" font-size="5.2" fill="#2440d0" font-weight="bold" text-anchor="middle" dominant-baseline="central" transform="rotate(-90 252.59999999999997 316)">5</text>
<text x="252.59999999999997" y="343" font-size="5.2" fill="#2440d0" font-weight="bold" text-anchor="middle" dominant-baseline="central" transform="rotate(-90 252.59999999999997 343)">6</text>
<text x="210.2" y="327.4" font-size="8.208" fill="#2d4a9c" text-anchor="start" style="font-family:&quot;Liberation Serif&quot;" font-weight="bold" textLength="14.2" lengthAdjust="spacing" >-F0</text>
<text x="191.1" y="336.8" font-size="5.8" fill="#4a5a90" text-anchor="start" font-weight="bold" textLength="33.8" lengthAdjust="spacing" >NH 00 100A</text>
<line x1="232.7" y1="350" x2="232.7" y2="363" stroke="#4d7fd6" stroke-width="1.3" />
<path d="M232.7 353.0 L235.0 356.3 L232.7 359.6 L230.39999999999998 356.3 Z" stroke="#4d7fd6" stroke-width="1.1" fill="#e8e8e8" />
<line x1="244.5" y1="350" x2="244.5" y2="363" stroke="#4d7fd6" stroke-width="1.3" />
<path d="M244.5 353.0 L246.8 356.3 L244.5 359.6 L242.2 356.3 Z" stroke="#4d7fd6" stroke-width="1.1" fill="#e8e8e8" />
<line x1="256.4" y1="350" x2="256.4" y2="363" stroke="#4d7fd6" stroke-width="1.3" />
<path d="M256.4 353.0 L258.7 356.3 L256.4 359.6 L254.09999999999997 356.3 Z" stroke="#4d7fd6" stroke-width="1.1" fill="#e8e8e8" />
<line x1="268.9" y1="350" x2="268.9" y2="363" stroke="#4d7fd6" stroke-width="1.3" />
<path d="M268.9 353.0 L271.2 356.3 L268.9 359.6 L266.59999999999997 356.3 Z" stroke="#4d7fd6" stroke-width="1.1" fill="#e8e8e8" />
<text x="215" y="354" font-size="8.208" fill="#2d4a9c" text-anchor="start" style="font-family:&quot;Liberation Serif&quot;" font-weight="bold" textLength="13.9" lengthAdjust="spacing" >-X0</text>
<text x="229.2" y="364" font-size="4.8" fill="#2440d0" font-weight="bold" text-anchor="middle" dominant-baseline="central" transform="rotate(-90 229.2 364)">L1</text>
<text x="241.0" y="364" font-size="4.8" fill="#2440d0" font-weight="bold" text-anchor="middle" dominant-baseline="central" transform="rotate(-90 241.0 364)">L2</text>
<text x="252.89999999999998" y="364" font-size="4.8" fill="#2440d0" font-weight="bold" text-anchor="middle" dominant-baseline="central" transform="rotate(-90 252.89999999999998 364)">L3</text>
<text x="265.4" y="364" font-size="4.8" fill="#2440d0" font-weight="bold" text-anchor="middle" dominant-baseline="central" transform="rotate(-90 265.4 364)">PEN</text>
<line x1="281" y1="194" x2="281" y2="350" stroke="#52cc52" stroke-width="1.1" stroke-dasharray="5.5 2.5"/>
<line x1="281" y1="194" x2="305" y2="194" stroke="#52cc52" stroke-width="1.1" stroke-dasharray="5.5 2.5"/>
<line x1="305" y1="194" x2="305" y2="321" stroke="#52cc52" stroke-width="1.1" stroke-dasharray="5.5 2.5"/>
<line x1="305" y1="321" x2="752" y2="321" stroke="#52cc52" stroke-width="1.1" stroke-dasharray="5.5 2.5"/>
<path d="M281 197 L281 194 L284 194" stroke="#4d7fd6" stroke-width="1.1" fill="none" />
<line x1="281" y1="350" x2="281" y2="362" stroke="#4d7fd6" stroke-width="1.2" />
<path d="M277 362.6 L285 362.6 M278.8 363.6 L281 366 L283.2 363.6" stroke="#4d7fd6" stroke-width="1.0" fill="none" />
<text x="749" y="320.5" font-size="5" fill="#2440d0" text-anchor="start" font-weight="bold" textLength="7" lengthAdjust="spacingAndGlyphs" >PE</text>
<text x="758.8" y="323.5" font-size="5.8" fill="#7d8a5c" text-anchor="start" font-weight="normal" textLength="14.2" lengthAdjust="spacing" >/2.0</text>
<line x1="365" y1="80" x2="365" y2="155.5" stroke="#1e1e1e" stroke-width="1.4"  stroke-opacity="0.64"/>
<line x1="365" y1="163" x2="365" y2="200.7" stroke="#1e1e1e" stroke-width="1.4"  stroke-opacity="0.64"/>
<line x1="365" y1="200.7" x2="528.5" y2="200.7" stroke="#1e1e1e" stroke-width="1.4"  stroke-opacity="0.64"/>
<line x1="461.2" y1="200.7" x2="461.2" y2="373" stroke="#1e1e1e" stroke-width="1.4"  stroke-opacity="0.64"/>
<line x1="377" y1="86.1" x2="377" y2="155.5" stroke="#1e1e1e" stroke-width="1.4"  stroke-opacity="0.64"/>
<line x1="377" y1="163" x2="377" y2="206.7" stroke="#1e1e1e" stroke-width="1.4"  stroke-opacity="0.64"/>
<line x1="377" y1="206.7" x2="528.5" y2="206.7" stroke="#1e1e1e" stroke-width="1.4"  stroke-opacity="0.64"/>
<line x1="473.3" y1="206.7" x2="473.3" y2="373" stroke="#1e1e1e" stroke-width="1.4"  stroke-opacity="0.64"/>
<line x1="389" y1="92" x2="389" y2="155.5" stroke="#1e1e1e" stroke-width="1.4"  stroke-opacity="0.64"/>
<line x1="389" y1="163" x2="389" y2="212.4" stroke="#1e1e1e" stroke-width="1.4"  stroke-opacity="0.64"/>
<line x1="389" y1="212.4" x2="528.5" y2="212.4" stroke="#1e1e1e" stroke-width="1.4"  stroke-opacity="0.64"/>
<line x1="485" y1="212.4" x2="485" y2="373" stroke="#1e1e1e" stroke-width="1.4"  stroke-opacity="0.64"/>
<line x1="401" y1="98" x2="401" y2="155.5" stroke="#1e1e1e" stroke-width="1.4"  stroke-opacity="0.64"/>
<line x1="401" y1="163" x2="401" y2="218.4" stroke="#1e1e1e" stroke-width="1.4"  stroke-opacity="0.64"/>
<line x1="401" y1="218.4" x2="528.5" y2="218.4" stroke="#1e1e1e" stroke-width="1.4"  stroke-opacity="0.64"/>
<line x1="497.2" y1="218.4" x2="497.2" y2="373" stroke="#1e1e1e" stroke-width="1.4"  stroke-opacity="0.64"/>
<path d="M362 78.8 Q364.7 79.2 365 83.5" stroke="#4d7fd6" stroke-width="1.1" fill="none" />
<path d="M367.6 78.2 L365.2 81.2" stroke="#4d7fd6" stroke-width="0.9" fill="none" />
<path d="M458.2 199.5 Q460.9 199.89999999999998 461.2 204.2" stroke="#4d7fd6" stroke-width="1.1" fill="none" />
<path d="M463.8 198.89999999999998 L461.4 201.89999999999998" stroke="#4d7fd6" stroke-width="0.9" fill="none" />
<path d="M365 197.7 L365 200.7 L368 200.7" stroke="#4d7fd6" stroke-width="1.1" fill="none" />
<path d="M374 84.89999999999999 Q376.7 85.3 377 89.6" stroke="#4d7fd6" stroke-width="1.1" fill="none" />
<path d="M379.6 84.3 L377.2 87.3" stroke="#4d7fd6" stroke-width="0.9" fill="none" />
<path d="M470.3 205.5 Q473.0 205.89999999999998 473.3 210.2" stroke="#4d7fd6" stroke-width="1.1" fill="none" />
<path d="M475.90000000000003 204.89999999999998 L473.5 207.89999999999998" stroke="#4d7fd6" stroke-width="0.9" fill="none" />
<path d="M377 203.7 L377 206.7 L380 206.7" stroke="#4d7fd6" stroke-width="1.1" fill="none" />
<path d="M386 90.8 Q388.7 91.2 389 95.5" stroke="#4d7fd6" stroke-width="1.1" fill="none" />
<path d="M391.6 90.2 L389.2 93.2" stroke="#4d7fd6" stroke-width="0.9" fill="none" />
<path d="M482 211.20000000000002 Q484.7 211.6 485 215.9" stroke="#4d7fd6" stroke-width="1.1" fill="none" />
<path d="M487.6 210.6 L485.2 213.6" stroke="#4d7fd6" stroke-width="0.9" fill="none" />
<path d="M389 209.4 L389 212.4 L392 212.4" stroke="#4d7fd6" stroke-width="1.1" fill="none" />
<path d="M398 96.8 Q400.7 97.2 401 101.5" stroke="#4d7fd6" stroke-width="1.1" fill="none" />
<path d="M403.6 96.2 L401.2 99.2" stroke="#4d7fd6" stroke-width="0.9" fill="none" />
<path d="M494.2 217.20000000000002 Q496.9 217.6 497.2 221.9" stroke="#4d7fd6" stroke-width="1.1" fill="none" />
<path d="M499.8 216.6 L497.4 219.6" stroke="#4d7fd6" stroke-width="0.9" fill="none" />
<path d="M401 215.4 L401 218.4 L404 218.4" stroke="#4d7fd6" stroke-width="1.1" fill="none" />
<text x="529.0" y="200.1" font-size="5.6" fill="#3a58c8" text-anchor="start" font-weight="bold" textLength="7" lengthAdjust="spacingAndGlyphs" opacity="0.8">L1</text>
<path d="M536.0 196.7 Q539.0 198.7 536.5 201.1" stroke="#4d7fd6" stroke-width="1.0" fill="none" />
<text x="529.0" y="206.1" font-size="5.6" fill="#3a58c8" text-anchor="start" font-weight="bold" textLength="7" lengthAdjust="spacingAndGlyphs" opacity="0.8">L2</text>
<path d="M536.0 202.7 Q539.0 204.7 536.5 207.1" stroke="#4d7fd6" stroke-width="1.0" fill="none" />
<text x="529.0" y="211.8" font-size="5.6" fill="#3a58c8" text-anchor="start" font-weight="bold" textLength="7" lengthAdjust="spacingAndGlyphs" opacity="0.8">L3</text>
<path d="M536.0 208.4 Q539.0 210.4 536.5 212.8" stroke="#4d7fd6" stroke-width="1.0" fill="none" />
<text x="529.0" y="217.8" font-size="5.6" fill="#3a58c8" text-anchor="start" font-weight="bold" textLength="4.5" lengthAdjust="spacingAndGlyphs" opacity="0.8">N</text>
<path d="M536.0 214.4 Q539.0 216.4 536.5 218.8" stroke="#4d7fd6" stroke-width="1.0" fill="none" />
<line x1="365" y1="151" x2="365" y2="155.5" stroke="#4d7fd6" stroke-width="1.1" />
<path d="M365 163 L362.8 155.5" stroke="#4d7fd6" stroke-width="1.1" fill="none" />
<text x="360.8" y="153.5" font-size="5.2" fill="#2440d0" font-weight="bold" text-anchor="middle" dominant-baseline="central" transform="rotate(-90 360.8 153.5)">1</text>
<text x="360.8" y="187.5" font-size="5.2" fill="#2440d0" font-weight="bold" text-anchor="middle" dominant-baseline="central" transform="rotate(-90 360.8 187.5)">2</text>
<path d="M363 170.8 C367.5 170.8 367.5 175.2 363 175.2" stroke="#4d7fd6" stroke-width="1.0" fill="none" />
<line x1="377" y1="151" x2="377" y2="155.5" stroke="#4d7fd6" stroke-width="1.1" />
<path d="M377 163 L374.8 155.5" stroke="#4d7fd6" stroke-width="1.1" fill="none" />
<text x="372.8" y="153.5" font-size="5.2" fill="#2440d0" font-weight="bold" text-anchor="middle" dominant-baseline="central" transform="rotate(-90 372.8 153.5)">3</text>
<text x="372.8" y="187.5" font-size="5.2" fill="#2440d0" font-weight="bold" text-anchor="middle" dominant-baseline="central" transform="rotate(-90 372.8 187.5)">4</text>
<path d="M375 170.8 C379.5 170.8 379.5 175.2 375 175.2" stroke="#4d7fd6" stroke-width="1.0" fill="none" />
<line x1="389" y1="151" x2="389" y2="155.5" stroke="#4d7fd6" stroke-width="1.1" />
<path d="M389 163 L386.8 155.5" stroke="#4d7fd6" stroke-width="1.1" fill="none" />
<text x="384.8" y="153.5" font-size="5.2" fill="#2440d0" font-weight="bold" text-anchor="middle" dominant-baseline="central" transform="rotate(-90 384.8 153.5)">5</text>
<text x="384.8" y="187.5" font-size="5.2" fill="#2440d0" font-weight="bold" text-anchor="middle" dominant-baseline="central" transform="rotate(-90 384.8 187.5)">6</text>
<path d="M387 170.8 C391.5 170.8 391.5 175.2 387 175.2" stroke="#4d7fd6" stroke-width="1.0" fill="none" />
<line x1="401" y1="151" x2="401" y2="155.5" stroke="#4d7fd6" stroke-width="1.1" />
<path d="M401 163 L398.8 155.5" stroke="#4d7fd6" stroke-width="1.1" fill="none" />
<text x="396.8" y="153.5" font-size="5.2" fill="#2440d0" font-weight="bold" text-anchor="middle" dominant-baseline="central" transform="rotate(-90 396.8 153.5)">N</text>
<text x="396.8" y="187.5" font-size="5.2" fill="#2440d0" font-weight="bold" text-anchor="middle" dominant-baseline="central" transform="rotate(-90 396.8 187.5)">N</text>
<path d="M399 170.8 C403.5 170.8 403.5 175.2 399 175.2" stroke="#4d7fd6" stroke-width="1.0" fill="none" />
<line x1="340" y1="161" x2="413" y2="161" stroke="#4d7fd6" stroke-width="1.1" stroke-dasharray="2.6 2"/>
<rect x="336" y="159.8" width="3" height="2.6" stroke="#1a3aa8" stroke-width="0" fill="#1a3aa8" />
<rect x="345" y="159.8" width="3" height="2.6" stroke="#1a3aa8" stroke-width="0" fill="#1a3aa8" />
<line x1="359" y1="169.5" x2="413" y2="169.5" stroke="#4d7fd6" stroke-width="1.2" />
<line x1="344" y1="176.5" x2="413" y2="176.5" stroke="#4d7fd6" stroke-width="1.2" />
<rect x="352.5" y="169.8" width="5" height="8" stroke="#1a3aa8" stroke-width="0" fill="#1a3aa8" />
<rect x="410.5" y="169.5" width="3" height="7" stroke="#1a3aa8" stroke-width="0" fill="#1a3aa8" />
<path d="M359 169.5 L359 164 L344 164 L344 182 L359 182 L359 176.5" stroke="#4d7fd6" stroke-width="1.1" fill="none" />
<path d="M348 169.5 C344.5 171 344.5 176 348 177.5" stroke="#4d7fd6" stroke-width="1.0" fill="none" />
<line x1="400" y1="166.8" x2="413" y2="166.8" stroke="#4d7fd6" stroke-width="1.2" />
<line x1="413" y1="152" x2="413" y2="166.8" stroke="#4d7fd6" stroke-width="1.1" />
<path d="M413 152.5 L413 151 L419 151 L419 181 L415.5 185" stroke="#4d7fd6" stroke-width="1.1" fill="none" />
<rect x="417.2" y="163" width="3.6" height="7.5" stroke="#4d7fd6" stroke-width="1.0" fill="#e8e8e8" />
<line x1="388.5" y1="180.5" x2="416" y2="180.5" stroke="#4d7fd6" stroke-width="1.2" />
<text x="419.5" y="188.5" font-size="4.6" fill="#2440d0" text-anchor="start" font-weight="bold" >T</text>
<text x="337" y="171.5" font-size="4.6" fill="#2440d0" text-anchor="start" font-weight="bold" >I</text>
<text x="314.4" y="168" font-size="9.072000000000001" fill="#2d4a9c" text-anchor="start" style="font-family:&quot;Liberation Serif&quot;" font-weight="bold" textLength="20.4" lengthAdjust="spacing" >-1F0</text>
<text x="291" y="177.2" font-size="6" fill="#4a5a90" text-anchor="start" font-weight="bold" textLength="43.8" lengthAdjust="spacing" >RCD 40A/0,03A</text>
<line x1="460.2" y1="235" x2="460.2" y2="255" stroke="#4d7fd6" stroke-width="1.1" />
<path d="M454.2 244.5 C455.7 241.5 457.2 241.5 459.2 244.5 M454.2 248 C455.7 245 457.2 245 459.2 248" stroke="#4d7fd6" stroke-width="1.0" fill="none" />
<text x="456.7" y="238.5" font-size="5.2" fill="#2440d0" font-weight="bold" text-anchor="middle" dominant-baseline="central" transform="rotate(-90 456.7 238.5)">1</text>
<text x="456.7" y="252.5" font-size="5.2" fill="#2440d0" font-weight="bold" text-anchor="middle" dominant-baseline="central" transform="rotate(-90 456.7 252.5)">2</text>
<line x1="472.3" y1="235" x2="472.3" y2="255" stroke="#4d7fd6" stroke-width="1.1" />
<path d="M466.3 244.5 C467.8 241.5 469.3 241.5 471.3 244.5 M466.3 248 C467.8 245 469.3 245 471.3 248" stroke="#4d7fd6" stroke-width="1.0" fill="none" />
<text x="468.8" y="238.5" font-size="5.2" fill="#2440d0" font-weight="bold" text-anchor="middle" dominant-baseline="central" transform="rotate(-90 468.8 238.5)">3</text>
<text x="468.8" y="252.5" font-size="5.2" fill="#2440d0" font-weight="bold" text-anchor="middle" dominant-baseline="central" transform="rotate(-90 468.8 252.5)">4</text>
<line x1="484" y1="235" x2="484" y2="255" stroke="#4d7fd6" stroke-width="1.1" />
<path d="M478 244.5 C479.5 241.5 481 241.5 483 244.5 M478 248 C479.5 245 481 245 483 248" stroke="#4d7fd6" stroke-width="1.0" fill="none" />
<text x="480.5" y="238.5" font-size="5.2" fill="#2440d0" font-weight="bold" text-anchor="middle" dominant-baseline="central" transform="rotate(-90 480.5 238.5)">5</text>
<text x="480.5" y="252.5" font-size="5.2" fill="#2440d0" font-weight="bold" text-anchor="middle" dominant-baseline="central" transform="rotate(-90 480.5 252.5)">6</text>
<text x="432.3" y="242.8" font-size="8.208" fill="#2d4a9c" text-anchor="start" style="font-family:&quot;Liberation Serif&quot;" font-weight="bold" textLength="18.3" lengthAdjust="spacing" >-1F1</text>
<text x="424.8" y="252.9" font-size="5.8" fill="#4a5a90" text-anchor="start" font-weight="bold" textLength="27.2" lengthAdjust="spacing" >LS C 32A</text>
<path d="M506 319.8 Q508.7 320.2 509 324.5" stroke="#4d7fd6" stroke-width="1.1" fill="none" />
<path d="M511.6 319.2 L509.2 322.2" stroke="#4d7fd6" stroke-width="0.9" fill="none" />
<line x1="509" y1="324" x2="509" y2="373" stroke="#52cc52" stroke-width="1.2" stroke-dasharray="4 2"/>
<line x1="461.2" y1="333" x2="461.2" y2="345" stroke="#4d7fd6" stroke-width="1.3" />
<path d="M461.2 335.09999999999997 L463.5 338.4 L461.2 341.7 L458.9 338.4 Z" stroke="#4d7fd6" stroke-width="1.1" fill="#e8e8e8" />
<text x="457.4" y="345.5" font-size="4.8" fill="#2440d0" font-weight="bold" text-anchor="middle" dominant-baseline="central" transform="rotate(-90 457.4 345.5)">L1</text>
<text x="457.4" y="353" font-size="4.8" fill="#2440d0" font-weight="bold" text-anchor="middle" dominant-baseline="central" transform="rotate(-90 457.4 353)">1</text>
<line x1="458.59999999999997" y1="359.6" x2="464.2" y2="353.8" stroke="#333" stroke-width="1.0" />
<text x="457.4" y="369" font-size="4.8" fill="#2440d0" font-weight="bold" text-anchor="middle" dominant-baseline="central" transform="rotate(-90 457.4 369)">L1</text>
<line x1="473.3" y1="333" x2="473.3" y2="345" stroke="#4d7fd6" stroke-width="1.3" />
<path d="M473.3 335.09999999999997 L475.6 338.4 L473.3 341.7 L471.0 338.4 Z" stroke="#4d7fd6" stroke-width="1.1" fill="#e8e8e8" />
<text x="469.5" y="345.5" font-size="4.8" fill="#2440d0" font-weight="bold" text-anchor="middle" dominant-baseline="central" transform="rotate(-90 469.5 345.5)">L2</text>
<text x="469.5" y="353" font-size="4.8" fill="#2440d0" font-weight="bold" text-anchor="middle" dominant-baseline="central" transform="rotate(-90 469.5 353)">2</text>
<line x1="470.7" y1="359.6" x2="476.3" y2="353.8" stroke="#333" stroke-width="1.0" />
<text x="469.5" y="369" font-size="4.8" fill="#2440d0" font-weight="bold" text-anchor="middle" dominant-baseline="central" transform="rotate(-90 469.5 369)">L2</text>
<line x1="485" y1="333" x2="485" y2="345" stroke="#4d7fd6" stroke-width="1.3" />
<path d="M485 335.09999999999997 L487.3 338.4 L485 341.7 L482.7 338.4 Z" stroke="#4d7fd6" stroke-width="1.1" fill="#e8e8e8" />
<text x="481.2" y="345.5" font-size="4.8" fill="#2440d0" font-weight="bold" text-anchor="middle" dominant-baseline="central" transform="rotate(-90 481.2 345.5)">L3</text>
<text x="481.2" y="353" font-size="4.8" fill="#2440d0" font-weight="bold" text-anchor="middle" dominant-baseline="central" transform="rotate(-90 481.2 353)">3</text>
<line x1="482.4" y1="359.6" x2="488" y2="353.8" stroke="#333" stroke-width="1.0" />
<text x="481.2" y="369" font-size="4.8" fill="#2440d0" font-weight="bold" text-anchor="middle" dominant-baseline="central" transform="rotate(-90 481.2 369)">L3</text>
<line x1="497.2" y1="333" x2="497.2" y2="345" stroke="#4d7fd6" stroke-width="1.3" />
<path d="M497.2 335.09999999999997 L499.5 338.4 L497.2 341.7 L494.9 338.4 Z" stroke="#4d7fd6" stroke-width="1.1" fill="#e8e8e8" />
<text x="493.4" y="345.5" font-size="4.8" fill="#2440d0" font-weight="bold" text-anchor="middle" dominant-baseline="central" transform="rotate(-90 493.4 345.5)">N</text>
<text x="493.4" y="353" font-size="4.8" fill="#2440d0" font-weight="bold" text-anchor="middle" dominant-baseline="central" transform="rotate(-90 493.4 353)">4</text>
<line x1="494.59999999999997" y1="359.6" x2="500.2" y2="353.8" stroke="#333" stroke-width="1.0" />
<text x="493.4" y="369" font-size="4.8" fill="#2440d0" font-weight="bold" text-anchor="middle" dominant-baseline="central" transform="rotate(-90 493.4 369)">N</text>
<line x1="509" y1="333" x2="509" y2="345" stroke="#4d7fd6" stroke-width="1.3" />
<path d="M509 335.09999999999997 L511.3 338.4 L509 341.7 L506.7 338.4 Z" stroke="#4d7fd6" stroke-width="1.1" fill="#e8e8e8" />
<text x="505.2" y="345.5" font-size="4.8" fill="#2440d0" font-weight="bold" text-anchor="middle" dominant-baseline="central" transform="rotate(-90 505.2 345.5)">PE</text>
<text x="505.2" y="353" font-size="4.8" fill="#2440d0" font-weight="bold" text-anchor="middle" dominant-baseline="central" transform="rotate(-90 505.2 353)">5</text>
<line x1="506.4" y1="359.6" x2="512" y2="353.8" stroke="#333" stroke-width="1.0" />
<text x="505.2" y="369" font-size="4.8" fill="#2440d0" font-weight="bold" text-anchor="middle" dominant-baseline="central" transform="rotate(-90 505.2 369)">PE</text>
<text x="437.8" y="336.1" font-size="8.208" fill="#2d4a9c" text-anchor="start" style="font-family:&quot;Liberation Serif&quot;" font-weight="bold" textLength="19.1" lengthAdjust="spacing" >-X44</text>
<line x1="437" y1="356.6" x2="515" y2="356.6" stroke="#3a3a3a" stroke-width="1.4" />
<text x="437.8" y="356" font-size="7.992000000000001" fill="#333" text-anchor="start" style="font-family:&quot;Liberation Serif&quot;" font-weight="bold" textLength="12.8" lengthAdjust="spacing" >-W1</text>
<text x="437" y="362.3" font-size="5.6" fill="#3a50e0" text-anchor="start" font-weight="bold" textLength="16.8" lengthAdjust="spacing" >NYM-J</text>
<text x="437" y="368.5" font-size="5.6" fill="#3a50e0" text-anchor="start" font-weight="bold" textLength="19.9" lengthAdjust="spacing" >x5x2,5</text>
<line x1="580.6" y1="80" x2="580.6" y2="155.5" stroke="#1e1e1e" stroke-width="1.4"  stroke-opacity="0.64"/>
<line x1="580.6" y1="163" x2="580.6" y2="200.7" stroke="#1e1e1e" stroke-width="1.4"  stroke-opacity="0.64"/>
<line x1="580.6" y1="200.7" x2="744" y2="200.7" stroke="#1e1e1e" stroke-width="1.4"  stroke-opacity="0.64"/>
<line x1="676.8" y1="200.7" x2="676.8" y2="373" stroke="#1e1e1e" stroke-width="1.4"  stroke-opacity="0.64"/>
<line x1="592.6" y1="86.1" x2="592.6" y2="155.5" stroke="#1e1e1e" stroke-width="1.4"  stroke-opacity="0.64"/>
<line x1="592.6" y1="163" x2="592.6" y2="206.7" stroke="#1e1e1e" stroke-width="1.4"  stroke-opacity="0.64"/>
<line x1="592.6" y1="206.7" x2="744" y2="206.7" stroke="#1e1e1e" stroke-width="1.4"  stroke-opacity="0.64"/>
<line x1="688.9" y1="206.7" x2="688.9" y2="373" stroke="#1e1e1e" stroke-width="1.4"  stroke-opacity="0.64"/>
<line x1="604.6" y1="92" x2="604.6" y2="155.5" stroke="#1e1e1e" stroke-width="1.4"  stroke-opacity="0.64"/>
<line x1="604.6" y1="163" x2="604.6" y2="212.4" stroke="#1e1e1e" stroke-width="1.4"  stroke-opacity="0.64"/>
<line x1="604.6" y1="212.4" x2="744" y2="212.4" stroke="#1e1e1e" stroke-width="1.4"  stroke-opacity="0.64"/>
<line x1="700.6" y1="212.4" x2="700.6" y2="373" stroke="#1e1e1e" stroke-width="1.4"  stroke-opacity="0.64"/>
<line x1="616.6" y1="98" x2="616.6" y2="155.5" stroke="#1e1e1e" stroke-width="1.4"  stroke-opacity="0.64"/>
<line x1="616.6" y1="163" x2="616.6" y2="218.4" stroke="#1e1e1e" stroke-width="1.4"  stroke-opacity="0.64"/>
<line x1="616.6" y1="218.4" x2="744" y2="218.4" stroke="#1e1e1e" stroke-width="1.4"  stroke-opacity="0.64"/>
<line x1="712.8" y1="218.4" x2="712.8" y2="373" stroke="#1e1e1e" stroke-width="1.4"  stroke-opacity="0.64"/>
<path d="M577.6 78.8 Q580.3000000000001 79.2 580.6 83.5" stroke="#4d7fd6" stroke-width="1.1" fill="none" />
<path d="M583.2 78.2 L580.8000000000001 81.2" stroke="#4d7fd6" stroke-width="0.9" fill="none" />
<path d="M673.8 199.5 Q676.5 199.89999999999998 676.8 204.2" stroke="#4d7fd6" stroke-width="1.1" fill="none" />
<path d="M679.4 198.89999999999998 L677.0 201.89999999999998" stroke="#4d7fd6" stroke-width="0.9" fill="none" />
<path d="M580.6 197.7 L580.6 200.7 L583.6 200.7" stroke="#4d7fd6" stroke-width="1.1" fill="none" />
<path d="M589.6 84.89999999999999 Q592.3000000000001 85.3 592.6 89.6" stroke="#4d7fd6" stroke-width="1.1" fill="none" />
<path d="M595.2 84.3 L592.8000000000001 87.3" stroke="#4d7fd6" stroke-width="0.9" fill="none" />
<path d="M685.9 205.5 Q688.6 205.89999999999998 688.9 210.2" stroke="#4d7fd6" stroke-width="1.1" fill="none" />
<path d="M691.5 204.89999999999998 L689.1 207.89999999999998" stroke="#4d7fd6" stroke-width="0.9" fill="none" />
<path d="M592.6 203.7 L592.6 206.7 L595.6 206.7" stroke="#4d7fd6" stroke-width="1.1" fill="none" />
<path d="M601.6 90.8 Q604.3000000000001 91.2 604.6 95.5" stroke="#4d7fd6" stroke-width="1.1" fill="none" />
<path d="M607.2 90.2 L604.8000000000001 93.2" stroke="#4d7fd6" stroke-width="0.9" fill="none" />
<path d="M697.6 211.20000000000002 Q700.3000000000001 211.6 700.6 215.9" stroke="#4d7fd6" stroke-width="1.1" fill="none" />
<path d="M703.2 210.6 L700.8000000000001 213.6" stroke="#4d7fd6" stroke-width="0.9" fill="none" />
<path d="M604.6 209.4 L604.6 212.4 L607.6 212.4" stroke="#4d7fd6" stroke-width="1.1" fill="none" />
<path d="M613.6 96.8 Q616.3000000000001 97.2 616.6 101.5" stroke="#4d7fd6" stroke-width="1.1" fill="none" />
<path d="M619.2 96.2 L616.8000000000001 99.2" stroke="#4d7fd6" stroke-width="0.9" fill="none" />
<path d="M709.8 217.20000000000002 Q712.5 217.6 712.8 221.9" stroke="#4d7fd6" stroke-width="1.1" fill="none" />
<path d="M715.4 216.6 L713.0 219.6" stroke="#4d7fd6" stroke-width="0.9" fill="none" />
<path d="M616.6 215.4 L616.6 218.4 L619.6 218.4" stroke="#4d7fd6" stroke-width="1.1" fill="none" />
<text x="744.5" y="200.1" font-size="5.6" fill="#3a58c8" text-anchor="start" font-weight="bold" textLength="7" lengthAdjust="spacingAndGlyphs" opacity="0.8">L1</text>
<path d="M751.5 196.7 Q754.5 198.7 752 201.1" stroke="#4d7fd6" stroke-width="1.0" fill="none" />
<text x="744.5" y="206.1" font-size="5.6" fill="#3a58c8" text-anchor="start" font-weight="bold" textLength="7" lengthAdjust="spacingAndGlyphs" opacity="0.8">L2</text>
<path d="M751.5 202.7 Q754.5 204.7 752 207.1" stroke="#4d7fd6" stroke-width="1.0" fill="none" />
<text x="744.5" y="211.8" font-size="5.6" fill="#3a58c8" text-anchor="start" font-weight="bold" textLength="7" lengthAdjust="spacingAndGlyphs" opacity="0.8">L3</text>
<path d="M751.5 208.4 Q754.5 210.4 752 212.8" stroke="#4d7fd6" stroke-width="1.0" fill="none" />
<text x="744.5" y="217.8" font-size="5.6" fill="#3a58c8" text-anchor="start" font-weight="bold" textLength="4.5" lengthAdjust="spacingAndGlyphs" opacity="0.8">N</text>
<path d="M751.5 214.4 Q754.5 216.4 752 218.8" stroke="#4d7fd6" stroke-width="1.0" fill="none" />
<line x1="580.6" y1="151" x2="580.6" y2="155.5" stroke="#4d7fd6" stroke-width="1.1" />
<path d="M580.6 163 L578.4 155.5" stroke="#4d7fd6" stroke-width="1.1" fill="none" />
<text x="576.4" y="153.5" font-size="5.2" fill="#2440d0" font-weight="bold" text-anchor="middle" dominant-baseline="central" transform="rotate(-90 576.4 153.5)">1</text>
<text x="576.4" y="187.5" font-size="5.2" fill="#2440d0" font-weight="bold" text-anchor="middle" dominant-baseline="central" transform="rotate(-90 576.4 187.5)">2</text>
<path d="M578.6 170.8 C583.1 170.8 583.1 175.2 578.6 175.2" stroke="#4d7fd6" stroke-width="1.0" fill="none" />
<line x1="592.6" y1="151" x2="592.6" y2="155.5" stroke="#4d7fd6" stroke-width="1.1" />
<path d="M592.6 163 L590.4 155.5" stroke="#4d7fd6" stroke-width="1.1" fill="none" />
<text x="588.4" y="153.5" font-size="5.2" fill="#2440d0" font-weight="bold" text-anchor="middle" dominant-baseline="central" transform="rotate(-90 588.4 153.5)">3</text>
<text x="588.4" y="187.5" font-size="5.2" fill="#2440d0" font-weight="bold" text-anchor="middle" dominant-baseline="central" transform="rotate(-90 588.4 187.5)">4</text>
<path d="M590.6 170.8 C595.1 170.8 595.1 175.2 590.6 175.2" stroke="#4d7fd6" stroke-width="1.0" fill="none" />
<line x1="604.6" y1="151" x2="604.6" y2="155.5" stroke="#4d7fd6" stroke-width="1.1" />
<path d="M604.6 163 L602.4 155.5" stroke="#4d7fd6" stroke-width="1.1" fill="none" />
<text x="600.4" y="153.5" font-size="5.2" fill="#2440d0" font-weight="bold" text-anchor="middle" dominant-baseline="central" transform="rotate(-90 600.4 153.5)">5</text>
<text x="600.4" y="187.5" font-size="5.2" fill="#2440d0" font-weight="bold" text-anchor="middle" dominant-baseline="central" transform="rotate(-90 600.4 187.5)">6</text>
<path d="M602.6 170.8 C607.1 170.8 607.1 175.2 602.6 175.2" stroke="#4d7fd6" stroke-width="1.0" fill="none" />
<line x1="616.6" y1="151" x2="616.6" y2="155.5" stroke="#4d7fd6" stroke-width="1.1" />
<path d="M616.6 163 L614.4 155.5" stroke="#4d7fd6" stroke-width="1.1" fill="none" />
<text x="612.4" y="153.5" font-size="5.2" fill="#2440d0" font-weight="bold" text-anchor="middle" dominant-baseline="central" transform="rotate(-90 612.4 153.5)">N</text>
<text x="612.4" y="187.5" font-size="5.2" fill="#2440d0" font-weight="bold" text-anchor="middle" dominant-baseline="central" transform="rotate(-90 612.4 187.5)">N</text>
<path d="M614.6 170.8 C619.1 170.8 619.1 175.2 614.6 175.2" stroke="#4d7fd6" stroke-width="1.0" fill="none" />
<line x1="555.6" y1="161" x2="628.6" y2="161" stroke="#4d7fd6" stroke-width="1.1" stroke-dasharray="2.6 2"/>
<rect x="551.6" y="159.8" width="3" height="2.6" stroke="#1a3aa8" stroke-width="0" fill="#1a3aa8" />
<rect x="560.6" y="159.8" width="3" height="2.6" stroke="#1a3aa8" stroke-width="0" fill="#1a3aa8" />
<line x1="574.6" y1="169.5" x2="628.6" y2="169.5" stroke="#4d7fd6" stroke-width="1.2" />
<line x1="559.6" y1="176.5" x2="628.6" y2="176.5" stroke="#4d7fd6" stroke-width="1.2" />
<rect x="568.1" y="169.8" width="5" height="8" stroke="#1a3aa8" stroke-width="0" fill="#1a3aa8" />
<rect x="626.1" y="169.5" width="3" height="7" stroke="#1a3aa8" stroke-width="0" fill="#1a3aa8" />
<path d="M574.6 169.5 L574.6 164 L559.6 164 L559.6 182 L574.6 182 L574.6 176.5" stroke="#4d7fd6" stroke-width="1.1" fill="none" />
<path d="M563.6 169.5 C560.1 171 560.1 176 563.6 177.5" stroke="#4d7fd6" stroke-width="1.0" fill="none" />
<line x1="615.6" y1="166.8" x2="628.6" y2="166.8" stroke="#4d7fd6" stroke-width="1.2" />
<line x1="628.6" y1="152" x2="628.6" y2="166.8" stroke="#4d7fd6" stroke-width="1.1" />
<path d="M628.6 152.5 L628.6 151 L634.6 151 L634.6 181 L631.1 185" stroke="#4d7fd6" stroke-width="1.1" fill="none" />
<rect x="632.8" y="163" width="3.6" height="7.5" stroke="#4d7fd6" stroke-width="1.0" fill="#e8e8e8" />
<line x1="604.1" y1="180.5" x2="631.6" y2="180.5" stroke="#4d7fd6" stroke-width="1.2" />
<text x="635.1" y="188.5" font-size="4.6" fill="#2440d0" text-anchor="start" font-weight="bold" >T</text>
<text x="552.6" y="171.5" font-size="4.6" fill="#2440d0" text-anchor="start" font-weight="bold" >I</text>
<text x="530.0" y="168" font-size="9.072000000000001" fill="#2d4a9c" text-anchor="start" style="font-family:&quot;Liberation Serif&quot;" font-weight="bold" textLength="20.4" lengthAdjust="spacing" >-2F0</text>
<text x="506.6" y="177.2" font-size="6" fill="#4a5a90" text-anchor="start" font-weight="bold" textLength="43.8" lengthAdjust="spacing" >RCD 40A/0,03A</text>
<line x1="675.8" y1="235" x2="675.8" y2="255" stroke="#4d7fd6" stroke-width="1.1" />
<path d="M669.8 244.5 C671.3 241.5 672.8 241.5 674.8 244.5 M669.8 248 C671.3 245 672.8 245 674.8 248" stroke="#4d7fd6" stroke-width="1.0" fill="none" />
<text x="672.3" y="238.5" font-size="5.2" fill="#2440d0" font-weight="bold" text-anchor="middle" dominant-baseline="central" transform="rotate(-90 672.3 238.5)">1</text>
<text x="672.3" y="252.5" font-size="5.2" fill="#2440d0" font-weight="bold" text-anchor="middle" dominant-baseline="central" transform="rotate(-90 672.3 252.5)">2</text>
<line x1="687.9" y1="235" x2="687.9" y2="255" stroke="#4d7fd6" stroke-width="1.1" />
<path d="M681.9 244.5 C683.4 241.5 684.9 241.5 686.9 244.5 M681.9 248 C683.4 245 684.9 245 686.9 248" stroke="#4d7fd6" stroke-width="1.0" fill="none" />
<text x="684.4" y="238.5" font-size="5.2" fill="#2440d0" font-weight="bold" text-anchor="middle" dominant-baseline="central" transform="rotate(-90 684.4 238.5)">3</text>
<text x="684.4" y="252.5" font-size="5.2" fill="#2440d0" font-weight="bold" text-anchor="middle" dominant-baseline="central" transform="rotate(-90 684.4 252.5)">4</text>
<line x1="699.6" y1="235" x2="699.6" y2="255" stroke="#4d7fd6" stroke-width="1.1" />
<path d="M693.6 244.5 C695.1 241.5 696.6 241.5 698.6 244.5 M693.6 248 C695.1 245 696.6 245 698.6 248" stroke="#4d7fd6" stroke-width="1.0" fill="none" />
<text x="696.1" y="238.5" font-size="5.2" fill="#2440d0" font-weight="bold" text-anchor="middle" dominant-baseline="central" transform="rotate(-90 696.1 238.5)">5</text>
<text x="696.1" y="252.5" font-size="5.2" fill="#2440d0" font-weight="bold" text-anchor="middle" dominant-baseline="central" transform="rotate(-90 696.1 252.5)">6</text>
<text x="647.9" y="242.8" font-size="8.208" fill="#2d4a9c" text-anchor="start" style="font-family:&quot;Liberation Serif&quot;" font-weight="bold" textLength="18.3" lengthAdjust="spacing" >-2F1</text>
<text x="640.4" y="252.9" font-size="5.8" fill="#4a5a90" text-anchor="start" font-weight="bold" textLength="27.2" lengthAdjust="spacing" >LS C 16A</text>
<path d="M721.6 319.8 Q724.3000000000001 320.2 724.6 324.5" stroke="#4d7fd6" stroke-width="1.1" fill="none" />
<path d="M727.2 319.2 L724.8000000000001 322.2" stroke="#4d7fd6" stroke-width="0.9" fill="none" />
<line x1="724.6" y1="324" x2="724.6" y2="373" stroke="#52cc52" stroke-width="1.2" stroke-dasharray="4 2"/>
<line x1="676.8" y1="333" x2="676.8" y2="345" stroke="#4d7fd6" stroke-width="1.3" />
<path d="M676.8 335.09999999999997 L679.0999999999999 338.4 L676.8 341.7 L674.5 338.4 Z" stroke="#4d7fd6" stroke-width="1.1" fill="#e8e8e8" />
<text x="673.0" y="345.5" font-size="4.8" fill="#2440d0" font-weight="bold" text-anchor="middle" dominant-baseline="central" transform="rotate(-90 673.0 345.5)">L1</text>
<text x="673.0" y="353" font-size="4.8" fill="#2440d0" font-weight="bold" text-anchor="middle" dominant-baseline="central" transform="rotate(-90 673.0 353)">1</text>
<line x1="674.1999999999999" y1="359.6" x2="679.8" y2="353.8" stroke="#333" stroke-width="1.0" />
<text x="673.0" y="369" font-size="4.8" fill="#2440d0" font-weight="bold" text-anchor="middle" dominant-baseline="central" transform="rotate(-90 673.0 369)">L1</text>
<line x1="688.9" y1="333" x2="688.9" y2="345" stroke="#4d7fd6" stroke-width="1.3" />
<path d="M688.9 335.09999999999997 L691.1999999999999 338.4 L688.9 341.7 L686.6 338.4 Z" stroke="#4d7fd6" stroke-width="1.1" fill="#e8e8e8" />
<text x="685.1" y="345.5" font-size="4.8" fill="#2440d0" font-weight="bold" text-anchor="middle" dominant-baseline="central" transform="rotate(-90 685.1 345.5)">L2</text>
<text x="685.1" y="353" font-size="4.8" fill="#2440d0" font-weight="bold" text-anchor="middle" dominant-baseline="central" transform="rotate(-90 685.1 353)">2</text>
<line x1="686.3" y1="359.6" x2="691.9" y2="353.8" stroke="#333" stroke-width="1.0" />
<text x="685.1" y="369" font-size="4.8" fill="#2440d0" font-weight="bold" text-anchor="middle" dominant-baseline="central" transform="rotate(-90 685.1 369)">L2</text>
<line x1="700.6" y1="333" x2="700.6" y2="345" stroke="#4d7fd6" stroke-width="1.3" />
<path d="M700.6 335.09999999999997 L702.9 338.4 L700.6 341.7 L698.3000000000001 338.4 Z" stroke="#4d7fd6" stroke-width="1.1" fill="#e8e8e8" />
<text x="696.8000000000001" y="345.5" font-size="4.8" fill="#2440d0" font-weight="bold" text-anchor="middle" dominant-baseline="central" transform="rotate(-90 696.8000000000001 345.5)">L3</text>
<text x="696.8000000000001" y="353" font-size="4.8" fill="#2440d0" font-weight="bold" text-anchor="middle" dominant-baseline="central" transform="rotate(-90 696.8000000000001 353)">3</text>
<line x1="698.0" y1="359.6" x2="703.6" y2="353.8" stroke="#333" stroke-width="1.0" />
<text x="696.8000000000001" y="369" font-size="4.8" fill="#2440d0" font-weight="bold" text-anchor="middle" dominant-baseline="central" transform="rotate(-90 696.8000000000001 369)">L3</text>
<line x1="712.8" y1="333" x2="712.8" y2="345" stroke="#4d7fd6" stroke-width="1.3" />
<path d="M712.8 335.09999999999997 L715.0999999999999 338.4 L712.8 341.7 L710.5 338.4 Z" stroke="#4d7fd6" stroke-width="1.1" fill="#e8e8e8" />
<text x="709.0" y="345.5" font-size="4.8" fill="#2440d0" font-weight="bold" text-anchor="middle" dominant-baseline="central" transform="rotate(-90 709.0 345.5)">N</text>
<text x="709.0" y="353" font-size="4.8" fill="#2440d0" font-weight="bold" text-anchor="middle" dominant-baseline="central" transform="rotate(-90 709.0 353)">4</text>
<line x1="710.1999999999999" y1="359.6" x2="715.8" y2="353.8" stroke="#333" stroke-width="1.0" />
<text x="709.0" y="369" font-size="4.8" fill="#2440d0" font-weight="bold" text-anchor="middle" dominant-baseline="central" transform="rotate(-90 709.0 369)">N</text>
<line x1="724.6" y1="333" x2="724.6" y2="345" stroke="#4d7fd6" stroke-width="1.3" />
<path d="M724.6 335.09999999999997 L726.9 338.4 L724.6 341.7 L722.3000000000001 338.4 Z" stroke="#4d7fd6" stroke-width="1.1" fill="#e8e8e8" />
<text x="720.8000000000001" y="345.5" font-size="4.8" fill="#2440d0" font-weight="bold" text-anchor="middle" dominant-baseline="central" transform="rotate(-90 720.8000000000001 345.5)">PE</text>
<text x="720.8000000000001" y="353" font-size="4.8" fill="#2440d0" font-weight="bold" text-anchor="middle" dominant-baseline="central" transform="rotate(-90 720.8000000000001 353)">5</text>
<line x1="722.0" y1="359.6" x2="727.6" y2="353.8" stroke="#333" stroke-width="1.0" />
<text x="720.8000000000001" y="369" font-size="4.8" fill="#2440d0" font-weight="bold" text-anchor="middle" dominant-baseline="central" transform="rotate(-90 720.8000000000001 369)">PE</text>
<text x="653.4" y="336.1" font-size="8.208" fill="#2d4a9c" text-anchor="start" style="font-family:&quot;Liberation Serif&quot;" font-weight="bold" textLength="19.1" lengthAdjust="spacing" >-X45</text>
<line x1="652.6" y1="356.6" x2="730.6" y2="356.6" stroke="#3a3a3a" stroke-width="1.4" />
<text x="653.4" y="356" font-size="7.992000000000001" fill="#333" text-anchor="start" style="font-family:&quot;Liberation Serif&quot;" font-weight="bold" textLength="12.8" lengthAdjust="spacing" >-W2</text>
<text x="652.6" y="362.3" font-size="5.6" fill="#3a50e0" text-anchor="start" font-weight="bold" textLength="16.8" lengthAdjust="spacing" >NYM-J</text>
<text x="652.6" y="368.5" font-size="5.6" fill="#3a50e0" text-anchor="start" font-weight="bold" textLength="19.9" lengthAdjust="spacing" >x5x2,5</text>
</svg><!--/DRAWING-->
</body></html>
